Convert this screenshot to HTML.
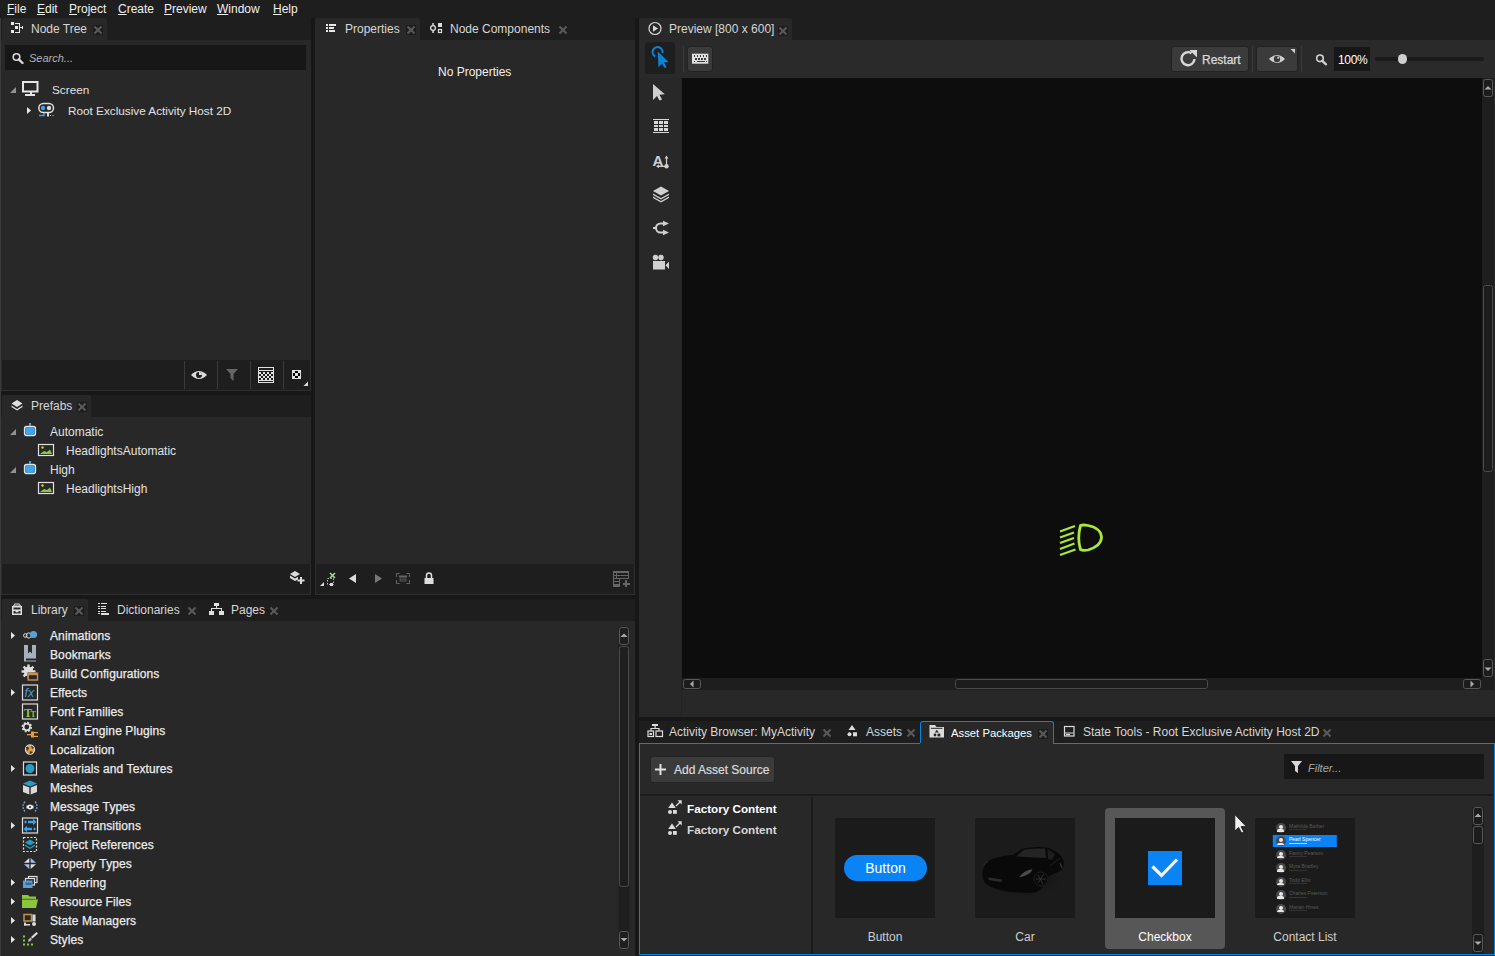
<!DOCTYPE html>
<html><head><meta charset="utf-8">
<style>
*{margin:0;padding:0;box-sizing:border-box}
html,body{width:1495px;height:956px;overflow:hidden;background:#1e1e1e;font-family:"Liberation Sans",sans-serif;font-size:12px;color:#e4e4e4}
.a{position:absolute}
.t{position:absolute;white-space:nowrap;line-height:14px}
.gap{background:#171717}
.panel{background:#282828}
.strip{background:#1e1e1e}
.tab{background:#282828;border-radius:2px 2px 0 0}
.cx{position:absolute;width:10px;height:10px;background:#1c1c1c}
.cx:before,.cx:after{content:"";position:absolute;left:0px;top:4px;width:10px;height:2px;background:#5a5a5a;transform:rotate(45deg)}
.cx:after{transform:rotate(-45deg)}
.cxi{position:absolute;width:10px;height:10px}
.cxi:before,.cxi:after{content:"";position:absolute;left:0px;top:4px;width:10px;height:2px;background:#5a5a5a;transform:rotate(45deg)}
.cxi:after{transform:rotate(-45deg)}
.tb{background:#1e1e1e;border:1px solid #2e2e2e}
.lib{color:#ececec;-webkit-text-stroke:0.25px #ececec;letter-spacing:0.1px}
.u{text-decoration:underline;text-underline-offset:1px}
svg{position:absolute;overflow:visible}
</style></head><body>
<!-- window border left -->
<div class="a" style="left:0;top:18px;width:1px;height:938px;background:#3a3a3a"></div>

<!-- MENU -->
<div class="t" style="left:7px;top:2px;color:#f0f0f0"><span class="u">F</span>ile</div>
<div class="t" style="left:37px;top:2px;color:#f0f0f0"><span class="u">E</span>dit</div>
<div class="t" style="left:69px;top:2px;color:#f0f0f0"><span class="u">P</span>roject</div>
<div class="t" style="left:118px;top:2px;color:#f0f0f0"><span class="u">C</span>reate</div>
<div class="t" style="left:164px;top:2px;color:#f0f0f0"><span class="u">P</span>review</div>
<div class="t" style="left:217px;top:2px;color:#f0f0f0"><span class="u">W</span>indow</div>
<div class="t" style="left:273px;top:2px;color:#f0f0f0"><span class="u">H</span>elp</div>

<!-- gaps between columns -->
<div class="a gap" style="left:311px;top:18px;width:4px;height:581px"></div>
<div class="a gap" style="left:635px;top:18px;width:4px;height:937px"></div>
<div class="a gap" style="left:1px;top:391px;width:310px;height:4px"></div>
<div class="a gap" style="left:1px;top:595px;width:634px;height:4px"></div>
<div class="a gap" style="left:639px;top:717px;width:856px;height:4px"></div>

<!-- NODE TREE -->
<div class="a tab" style="left:2px;top:18px;width:105px;height:22px"></div>
<div class="a panel" style="left:1px;top:40px;width:310px;height:320px"></div>
<div class="t" style="left:31px;top:22px;color:#d6d6d6">Node Tree</div>
<div class="cx" style="left:93px;top:25px"></div>
<div class="a" style="left:5px;top:45px;width:301px;height:25px;background:#171717"></div>
<div class="t" style="left:29px;top:51px;color:#b4b4b4;font-style:italic;font-size:11px">Search...</div>
<div class="a tb" style="left:1px;top:360px;width:310px;height:31px;border-top:none"></div>

<!-- PREFABS -->
<div class="a tab" style="left:2px;top:395px;width:89px;height:22px"></div>
<div class="a panel" style="left:1px;top:417px;width:310px;height:147px"></div>
<div class="t" style="left:31px;top:399px;color:#d6d6d6">Prefabs</div>
<div class="cx" style="left:77px;top:402px"></div>
<div class="a tb" style="left:1px;top:564px;width:310px;height:31px;border-top:none"></div>

<!-- PROPERTIES -->
<div class="a tab" style="left:315px;top:18px;width:105px;height:22px"></div>
<div class="a panel" style="left:315px;top:40px;width:320px;height:524px"></div>
<div class="t" style="left:345px;top:22px;color:#d6d6d6">Properties</div>
<div class="cx" style="left:406px;top:25px"></div>
<div class="t" style="left:450px;top:22px;color:#d6d6d6">Node Components</div>
<div class="cxi" style="left:558px;top:25px"></div>
<div class="t" style="left:438px;top:65px;color:#f0f0f0">No Properties</div>
<div class="a tb" style="left:315px;top:564px;width:320px;height:31px;border-top:none"></div>

<!-- LIBRARY -->
<div class="a tab" style="left:2px;top:599px;width:86px;height:22px"></div>
<div class="a panel" style="left:1px;top:621px;width:634px;height:335px"></div>
<div class="t" style="left:31px;top:603px;color:#d6d6d6">Library</div>
<div class="cx" style="left:74px;top:606px"></div>
<div class="t" style="left:117px;top:603px;color:#d6d6d6">Dictionaries</div>
<div class="cxi" style="left:187px;top:606px"></div>
<div class="t" style="left:231px;top:603px;color:#d6d6d6">Pages</div>
<div class="cxi" style="left:269px;top:606px"></div>

<!-- PREVIEW -->
<div class="a tab" style="left:639px;top:18px;width:153px;height:22px"></div>
<div class="a panel" style="left:639px;top:40px;width:856px;height:677px"></div>
<div class="t" style="left:669px;top:22px;color:#d6d6d6">Preview [800 x 600]</div>
<div class="cx" style="left:778px;top:26px"></div>
<div class="a" style="left:639px;top:40px;width:856px;height:38px;background:#2a2a2a"></div>
<div class="a" style="left:682px;top:78px;width:800px;height:600px;background:#0d0d0d"></div>

<!-- BOTTOM PANEL -->
<div class="a" style="left:920px;top:721px;width:134px;height:23px;background:#282828;border:1px solid #0a84d6;border-bottom:none;border-radius:3px 3px 0 0"></div>
<div class="a" style="left:639px;top:743px;width:856px;height:212px;background:#282828;border:1px solid #0a84d6;border-top:none"></div>
<div class="a" style="left:639px;top:743px;width:281px;height:1px;background:#0a84d6"></div>
<div class="a" style="left:1053px;top:743px;width:442px;height:1px;background:#0a84d6"></div>
<div class="t" style="left:669px;top:725px;color:#d6d6d6">Activity Browser: MyActivity</div>
<div class="cxi" style="left:822px;top:728px"></div>
<div class="t" style="left:866px;top:725px;color:#d6d6d6">Assets</div>
<div class="cxi" style="left:906px;top:728px"></div>
<div class="t" style="left:951px;top:726px;color:#ffffff;font-size:11.3px">Asset Packages</div>
<div class="cx" style="left:1038px;top:729px"></div>
<div class="t" style="left:1083px;top:725px;color:#d6d6d6">State Tools - Root Exclusive Activity Host 2D</div>
<div class="cxi" style="left:1322px;top:728px"></div>


<!-- NODE TREE CONTENT -->
<svg style="left:0;top:0" width="1" height="1">
<g fill="#e8e8e8" shape-rendering="crispEdges">
<rect x="11" y="22" width="3" height="3"/><rect x="15" y="26" width="3" height="3"/><rect x="11" y="30" width="3" height="3"/>
<rect x="15" y="23" width="5" height="1"/><rect x="19" y="23" width="1" height="10"/><rect x="15" y="32" width="5" height="1"/>
<rect x="20" y="27" width="3" height="1"/><rect x="22" y="26" width="1" height="3"/>
</g>
<!-- search icon -->
<g fill="none" stroke="#d8d8d8"><circle cx="16.5" cy="57" r="3.3" stroke-width="1.6"/></g>
<path d="M18.8 59.3 L22.5 63" stroke="#d8d8d8" stroke-width="2.4" stroke-linecap="round"/>
<!-- screen row -->
<path d="M10 93 L16 87 L16 93 Z" fill="#8f958c"/>
<rect x="23" y="82" width="14.5" height="9.5" fill="none" stroke="#e6e6e6" stroke-width="2"/>
<rect x="30" y="92" width="2" height="2" fill="#e6e6e6"/>
<rect x="25" y="94" width="10" height="2" fill="#e6e6e6"/>
<!-- root row -->
<path d="M27 107 L31 110.5 L27 114 Z" fill="#e8e8e8"/>
<rect x="38.8" y="103.5" width="14.7" height="9" rx="4.5" fill="none" stroke="#e0e0e0" stroke-width="1.5"/>
<circle cx="43" cy="108" r="2.2" fill="#3aa0e8"/><circle cx="49" cy="108" r="2.2" fill="#d8d8d8"/>
<path d="M39 115.5 H44 V113" fill="none" stroke="#3aa0e8" stroke-width="1.6"/>
<rect x="47" y="113" width="2" height="3.5" fill="#e0e0e0"/>
<rect x="50" y="115" width="1" height="1" fill="#ccc"/><rect x="52.5" y="115" width="1" height="1" fill="#ccc"/>
</svg>
<div class="t" style="left:52px;top:83px;font-size:11.75px;color:#e2e2e2">Screen</div>
<div class="t" style="left:68px;top:104px;font-size:11.75px;color:#e2e2e2">Root Exclusive Activity Host 2D</div>

<!-- node tree toolbar -->
<div class="a" style="left:184px;top:361px;width:1px;height:28px;background:#3a3a3a"></div>
<div class="a" style="left:217px;top:361px;width:1px;height:28px;background:#3a3a3a"></div>
<div class="a" style="left:250px;top:361px;width:1px;height:28px;background:#3a3a3a"></div>
<div class="a" style="left:283px;top:361px;width:1px;height:28px;background:#3a3a3a"></div>
<svg style="left:0;top:0" width="1" height="1">
<path d="M191 375 Q199 367 207 375 Q199 383 191 375 Z" fill="#dcdcdc"/>
<circle cx="199" cy="375" r="3" fill="#1e1e1e"/><path d="M199 372 A3 3 0 0 1 202 375 L199 375 Z" fill="#dcdcdc"/>
<path d="M226 369 H238 L233.5 374 V381 L230.5 378 V374 Z" fill="#666"/>
<rect x="258.5" y="367.5" width="15" height="15" fill="none" stroke="#e0e0e0" stroke-width="1"/>
<g fill="#e0e0e0" shape-rendering="crispEdges">
<rect x="259" y="372" width="2" height="2"/><rect x="263" y="372" width="2" height="2"/><rect x="267" y="372" width="2" height="2"/><rect x="271" y="372" width="2" height="2"/>
<rect x="261" y="374" width="2" height="2"/><rect x="265" y="374" width="2" height="2"/><rect x="269" y="374" width="2" height="2"/>
<rect x="259" y="376" width="2" height="2"/><rect x="263" y="376" width="2" height="2"/><rect x="267" y="376" width="2" height="2"/><rect x="271" y="376" width="2" height="2"/>
<rect x="261" y="378" width="2" height="2"/><rect x="265" y="378" width="2" height="2"/><rect x="269" y="378" width="2" height="2"/>
<rect x="259" y="380" width="15" height="1"/><rect x="259" y="370" width="15" height="1"/>
</g>
<rect x="292" y="370" width="9" height="9" fill="#e0e0e0"/>
<g fill="#000" shape-rendering="crispEdges"><rect x="295" y="371" width="3" height="2"/><rect x="295" y="376" width="3" height="2"/><rect x="293" y="373" width="2" height="3"/><rect x="298" y="373" width="2" height="3"/></g>
<path d="M303.5 386 L308 381.5 L308 386 Z" fill="#ddd"/>
</svg>

<!-- PREFABS CONTENT -->
<svg style="left:0;top:0" width="1" height="1">
<path d="M17 400 L22.5 403.5 L17 407 L11.5 403.5 Z" fill="#e0e0e0"/>
<path d="M11.5 405.5 L17 409 L22.5 405.5 L22.5 407 L17 410.5 L11.5 407 Z" fill="#e0e0e0"/>
<path d="M10 435 L16 429 L16 435 Z" fill="#8f958c"/>
<rect x="24.5" y="426.5" width="11" height="9" rx="2" fill="#2a7fc0" stroke="#e0e0e0" stroke-width="1.3"/>
<rect x="26" y="428" width="8" height="6" rx="1" fill="#3ea6ea"/>
<rect x="29" y="423" width="2" height="3" fill="#3ea6ea"/>
<rect x="38.5" y="444.5" width="15" height="11" fill="none" stroke="#e0e0e0" stroke-width="1.2"/>
<path d="M40 454 L44 451 L47 452 L50 449.5 L52 454 Z" fill="#8cc63f"/>
<circle cx="42.5" cy="447.5" r="1.2" fill="#c8e020"/>
<path d="M10 473 L16 467 L16 473 Z" fill="#8f958c"/>
<rect x="24.5" y="464.5" width="11" height="9" rx="2" fill="#2a7fc0" stroke="#e0e0e0" stroke-width="1.3"/>
<rect x="26" y="466" width="8" height="6" rx="1" fill="#3ea6ea"/>
<rect x="29" y="461" width="2" height="3" fill="#3ea6ea"/>
<rect x="38.5" y="482.5" width="15" height="11" fill="none" stroke="#e0e0e0" stroke-width="1.2"/>
<path d="M40 492 L44 489 L47 490 L50 487.5 L52 492 Z" fill="#8cc63f"/>
<circle cx="42.5" cy="485.5" r="1.2" fill="#c8e020"/>
<!-- prefab toolbar icon -->
<path d="M295 571 L300 574 L295 577 L290 574 Z" fill="#dcdcdc"/>
<path d="M290 575.5 L295 578.5 L298 576.7 V579.5 L295 581 L290 578 Z" fill="#dcdcdc"/>
<rect x="300" y="577" width="2" height="7" fill="#dcdcdc"/><rect x="297.5" y="579.5" width="7" height="2" fill="#dcdcdc"/>
</svg>
<div class="t" style="left:50px;top:425px;color:#e2e2e2">Automatic</div>
<div class="t" style="left:66px;top:444px;color:#e2e2e2">HeadlightsAutomatic</div>
<div class="t" style="left:50px;top:463px;color:#e2e2e2">High</div>
<div class="t" style="left:66px;top:482px;color:#e2e2e2">HeadlightsHigh</div>

<!-- PROPERTIES CONTENT -->
<svg style="left:0;top:0" width="1" height="1">
<g fill="#e8e8e8" shape-rendering="crispEdges">
<rect x="326" y="24" width="2" height="2"/><rect x="329" y="24" width="7" height="2"/>
<rect x="326" y="27" width="2" height="2"/><rect x="329" y="27" width="5" height="2"/>
<rect x="326" y="30" width="2" height="2"/><rect x="329" y="30" width="6" height="2"/>
</g>
<rect x="432.3" y="23" width="1.5" height="10" fill="#ddd"/>
<circle cx="433" cy="28" r="2.4" fill="#1e1e1e" stroke="#ddd" stroke-width="1.3"/>
<rect x="438" y="23" width="4" height="4" fill="#ddd"/>
<rect x="438.5" y="29.5" width="3" height="3" fill="none" stroke="#ddd" stroke-width="1.2"/>
<!-- bottom toolbar -->
<path d="M320 586 L324 582 L324 586 Z" fill="#ddd"/>
<rect x="327.5" y="578.5" width="6" height="6" fill="none" stroke="#bbb" stroke-dasharray="1.5 1.5"/>
<rect x="330" y="583" width="3" height="3" fill="#ddd"/>
<path d="M330 573 L335 578 M335 573 L330 578" stroke="#b5d5a0" stroke-width="1.5"/>
<path d="M349 578.5 L356 574 L356 583 Z" fill="#dcdcdc"/>
<path d="M375 574 L382 578.5 L375 583 Z" fill="#777"/>
<g fill="none" stroke="#666" stroke-width="1">
<path d="M396.5 577 V573.5 H399.5 M406.5 573.5 H409.5 V577 M409.5 580 V583.5 H406.5 M399.5 583.5 H396.5 V580"/>
</g>
<rect x="399" y="575.5" width="8" height="2" fill="#666"/><rect x="400" y="579" width="6" height="2" fill="none" stroke="#666" stroke-width="0.8"/>
<path d="M426.5 578 V575.5 A2.5 2.5 0 0 1 431.5 575.5 V578" fill="none" stroke="#ddd" stroke-width="1.5"/>
<rect x="424.5" y="578" width="9" height="6" fill="#ddd"/>
<g shape-rendering="crispEdges">
<rect x="613" y="571" width="16" height="16" fill="#666"/>
<g fill="#1e1e1e"><rect x="614" y="573" width="2" height="2"/><rect x="617" y="573" width="11" height="2"/><rect x="614" y="576" width="2" height="2"/><rect x="617" y="576" width="11" height="2"/><rect x="614" y="579" width="5" height="2"/><rect x="614" y="582" width="5" height="2"/>
<rect x="620" y="579" width="9" height="8"/></g>
<rect x="625" y="580" width="2" height="7" fill="#666"/><rect x="622.5" y="582.5" width="7" height="2" fill="#666"/>
</g>
</svg>


<!-- LIBRARY CONTENT -->
<svg style="left:0;top:0" width="1" height="1">
<path d="M11 632.0 L15 635.5 L11 639.0 Z" fill="#e4e8e0"/>
<path d="M11 689.0 L15 692.5 L11 696.0 Z" fill="#e4e8e0"/>
<path d="M11 765.0 L15 768.5 L11 772.0 Z" fill="#e4e8e0"/>
<path d="M11 822.0 L15 825.5 L11 829.0 Z" fill="#e4e8e0"/>
<path d="M11 879.0 L15 882.5 L11 886.0 Z" fill="#e4e8e0"/>
<path d="M11 898.0 L15 901.5 L11 905.0 Z" fill="#e4e8e0"/>
<path d="M11 917.0 L15 920.5 L11 924.0 Z" fill="#e4e8e0"/>
<path d="M11 936.0 L15 939.5 L11 943.0 Z" fill="#e4e8e0"/>
<circle cx="25.3" cy="635.5" r="1.8" fill="none" stroke="#ddd" stroke-width="1"/><circle cx="28.8" cy="635.5" r="2.6" fill="none" stroke="#ddd" stroke-width="1"/><circle cx="33.5" cy="634.5" r="3.6" fill="#5aa0d8"/>
<path d="M24 645.0 H36 V658.5 H26 V660.5 H36 V661.5 H24 Z" fill="#a8b0bc"/><path d="M28 645.0 V653.5 L30 651.5 L32 653.5 V645.0 Z" fill="#282828"/>
<circle cx="28.5" cy="671.5" r="4.8" fill="#ddd"/><rect x="27.3" y="664.5" width="2.4" height="3" fill="#ddd" transform="rotate(0 28.5 671.5)"/><rect x="27.3" y="664.5" width="2.4" height="3" fill="#ddd" transform="rotate(45 28.5 671.5)"/><rect x="27.3" y="664.5" width="2.4" height="3" fill="#ddd" transform="rotate(90 28.5 671.5)"/><rect x="27.3" y="664.5" width="2.4" height="3" fill="#ddd" transform="rotate(135 28.5 671.5)"/><rect x="27.3" y="664.5" width="2.4" height="3" fill="#ddd" transform="rotate(180 28.5 671.5)"/><rect x="27.3" y="664.5" width="2.4" height="3" fill="#ddd" transform="rotate(225 28.5 671.5)"/><rect x="27.3" y="664.5" width="2.4" height="3" fill="#ddd" transform="rotate(270 28.5 671.5)"/><rect x="27.3" y="664.5" width="2.4" height="3" fill="#ddd" transform="rotate(315 28.5 671.5)"/><rect x="27.5" y="672.5" width="10.5" height="8" fill="#282828"/><rect x="28.2" y="673.2" width="9.3" height="6.8" fill="none" stroke="#c89050" stroke-width="1.4"/><rect x="28" y="673.0" width="10" height="2.2" fill="#c89050"/>
<rect x="22.5" y="685.0" width="15" height="15" fill="none" stroke="#ddd" stroke-width="1.2"/><text x="24.5" y="696.5" font-family="Liberation Sans" font-style="italic" font-size="12.5" fill="#4a9ad8">fx</text>
<rect x="22.5" y="704.0" width="15" height="15" fill="none" stroke="#ddd" stroke-width="1.2"/><text x="24" y="716.5" font-family="Liberation Serif" font-weight="bold" font-size="12" fill="#8cc63f">T</text><text x="30.5" y="716.5" font-family="Liberation Serif" font-weight="bold" font-size="8" fill="#8cc63f">T</text>
<circle cx="26.8" cy="727.0" r="4" fill="none" stroke="#ddd" stroke-width="2.5" stroke-dasharray="1.8 1.3"/><circle cx="26.8" cy="727.0" r="3.2" fill="none" stroke="#ddd" stroke-width="1.6"/><rect x="27" y="734.0" width="5" height="1.3" fill="#e0a040"/><path d="M31 731.5 H34 V737.5 H31 Z" fill="#e0a040"/><rect x="34" y="732.0" width="4" height="1.2" fill="#e0a040"/><rect x="34" y="735.8" width="4" height="1.2" fill="#e0a040"/>
<circle cx="30" cy="749.5" r="4.6" fill="#e0a040" stroke="#ddd" stroke-width="1.1"/><path d="M26 747 Q28 746 29 748 L27.5 751 Q26 750 26 747 Z M31 745.5 Q33 746 34 748 L32 749 Z M30 751 L33 752 Q31.5 754 29.5 754 Z" fill="#3a3a3a"/>
<rect x="23.5" y="762.0" width="13" height="13" fill="#1e1e1e" stroke="#ddd" stroke-width="1.2"/><circle cx="30" cy="768.5" r="4.5" fill="#2a9ac0"/>
<path d="M30 780.5 L37 783.5 L30 786.5 L23 783.5 Z" fill="#2a9ac0"/><path d="M23 785.0 L29.3 787.5 V794.5 L23 792.0 Z" fill="#d8d8d8"/><path d="M37 785.0 L30.7 787.5 V794.5 L37 792.0 Z" fill="#d8d8d8"/>
<path d="M25 801.5 Q21 806.5 25 811.5 M35 801.5 Q39 806.5 35 811.5" fill="none" stroke="#6a9ad8" stroke-width="1.3" stroke-dasharray="2 1"/><rect x="26.5" y="805.5" width="7" height="3" fill="#eee"/><circle cx="30" cy="807.0" r="2.5" fill="#eee"/><circle cx="30" cy="807.0" r="1" fill="#282828"/>
<rect x="22.5" y="818.0" width="15" height="15" fill="none" stroke="#ddd" stroke-width="1.2"/><path d="M24.5 822 H26.5 M28 822 H34 M26 829 H32 M33.5 829 H35.5" stroke="#3aa0e8" stroke-width="2.6"/><path d="M33 818.8 L36.5 822 L33 825.2 Z M27 825.8 L23.5 829 L27 832.2 Z" fill="#3aa0e8"/>
<rect x="23.5" y="837.5" width="13" height="14" fill="none" stroke="#ddd" stroke-width="1.2" stroke-dasharray="2 1.5"/><path d="M30 839.5 L35 842.5 L30 845.5 L25 842.5 Z" fill="#2a9ac0"/><path d="M25 844.5 L30 847.5 L35 844.5 V846.0 L30 849.0 L25 846.0 Z" fill="#2a9ac0"/>
<path d="M29.3 858.0 L24 862.8 H29.3 Z" fill="#ddd"/><path d="M30.7 858.0 L36 862.8 H30.7 Z" fill="#a0c0f0"/><path d="M29.3 869.0 L24 864.2 H29.3 Z" fill="#a0c0f0"/><path d="M30.7 869.0 L36 864.2 H30.7 Z" fill="#ddd"/>
<rect x="28.5" y="876.5" width="8.5" height="6" fill="none" stroke="#ddd" stroke-width="1.2"/><rect x="25.5" y="878.5" width="9" height="6.5" fill="#282828" stroke="#ddd" stroke-width="1.2"/><rect x="23" y="880.5" width="9.5" height="7.5" fill="#5aa0d8"/><rect x="25.5" y="882.5" width="6" height="2.5" fill="#3a6a90"/>
<path d="M22 895.0 H28 L29.5 896.5 H36 V899.5 H22 Z" fill="#8cc63f"/><path d="M22 908.0 V899.5 H38 L36 908.0 Z" fill="#8cc63f"/><path d="M22 898.5 H35 V900.0 H22 Z" fill="#282828" opacity="0.3"/>
<rect x="24" y="914.5" width="7.5" height="6.5" fill="none" stroke="#c89050" stroke-width="1.5"/><rect x="32.5" y="914.5" width="3" height="7" fill="#ddd"/><rect x="24" y="922.5" width="2" height="3" fill="#ddd"/><rect x="24" y="924.0" width="6" height="1.5" fill="#ddd"/><circle cx="34" cy="924.0" r="2" fill="#ddd"/>
<g fill="#8cc63f"><rect x="23" y="935.5" width="2" height="2"/><rect x="23" y="939.5" width="2" height="2"/><rect x="23" y="943.5" width="2" height="2"/><rect x="27" y="943.5" width="2" height="2"/><rect x="31" y="943.5" width="2" height="2"/></g><path d="M36.5 932.0 L38 933.5 L32.5 938.5 L31 937.0 Z" fill="#ddd"/><path d="M30.5 937.5 L32 939.0 L30 941.5 L28 941.5 L28.5 939.5 Z" fill="#bbb"/>

<!-- library tab icons -->
<path d="M12 606 H22 V615 H12 Z" fill="#e0e0e0"/><rect x="13.5" y="607.5" width="7" height="2" fill="#282828"/><rect x="13.5" y="611" width="7" height="2.5" fill="#282828"/><rect x="15.5" y="611" width="3" height="1.3" fill="#e0e0e0"/><path d="M13 606 L14.5 603.5 H19.5 L21 606 Z" fill="#e0e0e0"/><rect x="14.5" y="604.5" width="5" height="1" fill="#282828"/>
<g fill="#e0e0e0" shape-rendering="crispEdges">
<rect x="98" y="603" width="2" height="1.3"/><rect x="98" y="605.5" width="2" height="1.3"/><rect x="98" y="608" width="2" height="1.3"/><rect x="98" y="610.5" width="2" height="1.3"/><rect x="98" y="613" width="2" height="1.3"/><rect x="101" y="603" width="6" height="1.3"/><rect x="101" y="605.5" width="5" height="1.3"/><rect x="101" y="608" width="5" height="1.3"/><rect x="101" y="610.5" width="5" height="1.3"/><rect x="101" y="613" width="8" height="1.6"/>
<rect x="214" y="603" width="5" height="3"/><rect x="216" y="606" width="1" height="3"/><rect x="211" y="608" width="11" height="1"/><rect x="211" y="608" width="1" height="3"/><rect x="221" y="608" width="1" height="3"/><rect x="209" y="611" width="5" height="4"/><rect x="219" y="611" width="5" height="4"/>
</g>
<!-- library scrollbar -->
<rect x="618.5" y="626.5" width="11" height="322" fill="#1e1e1e"/>
<rect x="619.5" y="627.5" width="9" height="17" rx="2" fill="#1e1e1e" stroke="#5a5a5a" stroke-width="1"/>
<path d="M620.5 637 L624 633.5 L627.5 637 Z" fill="#aaa"/>
<rect x="619.5" y="646.5" width="9" height="240" rx="2" fill="#1e1e1e" stroke="#4a4a4a" stroke-width="1"/>
<rect x="619.5" y="931.5" width="9" height="17" rx="2" fill="#1e1e1e" stroke="#5a5a5a" stroke-width="1"/>
<path d="M620.5 938 L624 941.5 L627.5 938 Z" fill="#aaa"/>
</svg>
<div class="t lib" style="left:50px;top:629px">Animations</div>
<div class="t lib" style="left:50px;top:648px">Bookmarks</div>
<div class="t lib" style="left:50px;top:667px">Build Configurations</div>
<div class="t lib" style="left:50px;top:686px">Effects</div>
<div class="t lib" style="left:50px;top:705px">Font Families</div>
<div class="t lib" style="left:50px;top:724px">Kanzi Engine Plugins</div>
<div class="t lib" style="left:50px;top:743px">Localization</div>
<div class="t lib" style="left:50px;top:762px">Materials and Textures</div>
<div class="t lib" style="left:50px;top:781px">Meshes</div>
<div class="t lib" style="left:50px;top:800px">Message Types</div>
<div class="t lib" style="left:50px;top:819px">Page Transitions</div>
<div class="t lib" style="left:50px;top:838px">Project References</div>
<div class="t lib" style="left:50px;top:857px">Property Types</div>
<div class="t lib" style="left:50px;top:876px">Rendering</div>
<div class="t lib" style="left:50px;top:895px">Resource Files</div>
<div class="t lib" style="left:50px;top:914px">State Managers</div>
<div class="t lib" style="left:50px;top:933px">Styles</div>


<!-- PREVIEW CONTENT -->
<div class="a" style="left:681px;top:78px;width:1px;height:639px;background:#232323"></div>
<div class="a" style="left:645px;top:42px;width:30px;height:32px;background:#1e1e1e;border-radius:3px"></div>
<div class="a" style="left:683px;top:46px;width:1px;height:26px;background:#3a3a3a"></div>
<div class="a" style="left:687px;top:46px;width:26px;height:26px;background:#3b3b3b;border-radius:3px;border:1px solid #222"></div>
<div class="a" style="left:1171px;top:46px;width:78px;height:26px;background:#3b3b3b;border-radius:3px;border:1px solid #222"></div>
<div class="a" style="left:1252px;top:46px;width:1px;height:26px;background:#3a3a3a"></div>
<div class="a" style="left:1256px;top:46px;width:42px;height:26px;background:#3b3b3b;border-radius:3px;border:1px solid #222"></div>
<div class="a" style="left:1301px;top:46px;width:1px;height:26px;background:#3a3a3a"></div>
<div class="a" style="left:1334px;top:47px;width:36px;height:24px;background:#171717"></div>
<div class="t" style="left:1338px;top:53px;color:#ffffff;font-size:12px;letter-spacing:-0.3px">100%</div>
<div class="t" style="left:1202px;top:53px;color:#dcdcdc;font-size:12px;-webkit-text-stroke:0.25px #dcdcdc">Restart</div>
<div class="a" style="left:1375px;top:57px;width:109px;height:4px;background:#1a1a1a;border-radius:3px"></div>
<div class="a" style="left:1397.5px;top:54px;width:9.5px;height:9.5px;background:#cfcfcf;border-radius:50%"></div>
<svg style="left:0;top:0" width="1" height="1">
<!-- preview tab icon -->
<circle cx="655" cy="28.5" r="6" fill="none" stroke="#d8d8d8" stroke-width="1.2"/>
<path d="M653 25.3 L658 28.5 L653 31.7 Z" fill="#d8d8d8"/>
<!-- interact -->
<path d="M655.2 56.5 A5 5 0 1 1 662.5 53" fill="none" stroke="#0a84d6" stroke-width="2"/>
<path d="M657.7 51.5 L668.5 62 L664 62.5 L666.5 67 L664.5 68 L662 63.5 L658.5 67.5 Z" fill="#0a84d6"/>
<!-- keyboard -->
<rect x="692" y="53.7" width="16.3" height="10" fill="#e0e0e0"/>
<g fill="#3a3a3a" shape-rendering="crispEdges">
<rect x="693.5" y="55.2" width="1.5" height="1.5"/><rect x="696.5" y="55.2" width="1.5" height="1.5"/><rect x="699.5" y="55.2" width="1.5" height="1.5"/><rect x="702.5" y="55.2" width="1.5" height="1.5"/><rect x="705.5" y="55.2" width="1.5" height="1.5"/>
<rect x="695" y="58" width="1.5" height="1.5"/><rect x="698" y="58" width="1.5" height="1.5"/><rect x="701" y="58" width="1.5" height="1.5"/><rect x="704" y="58" width="1.5" height="1.5"/>
<rect x="693.5" y="60.8" width="1.5" height="1.5"/><rect x="696.5" y="61" width="8" height="1"/><rect x="705.5" y="60.8" width="1.5" height="1.5"/>
</g>
<!-- select -->
<path d="M653 84 L664.8 94.3 L659.5 94.8 L662 99.5 L659.5 100.5 L657 96 L653 100 Z" fill="#cfcfcf"/>
<!-- table -->
<g fill="#d8d8d8" shape-rendering="crispEdges">
<rect x="653" y="119" width="16" height="1"/><rect x="653" y="132" width="16" height="1"/>
<rect x="654" y="121" width="4" height="3"/><rect x="659" y="121" width="4" height="3"/><rect x="664" y="121" width="4" height="3"/>
<rect x="654" y="125" width="4" height="2"/><rect x="659" y="125" width="4" height="2"/><rect x="664" y="125" width="4" height="2"/>
<rect x="654" y="128" width="4" height="3"/><rect x="659" y="128" width="4" height="3"/><rect x="664" y="128" width="4" height="3"/>
</g>
<!-- A icon -->
<text x="652.5" y="166" font-family="Liberation Sans" font-weight="bold" font-size="15" fill="#cfcfcf">A</text>
<path d="M666.5 158 V165 M658 166.3 H665" stroke="#cfcfcf" stroke-width="1.2"/>
<path d="M664.5 158.5 L666.5 155.5 L668.5 158.5 Z M659 164.3 L656 166.3 L659 168.3 Z" fill="#cfcfcf"/>
<circle cx="666.5" cy="166.3" r="2.2" fill="#cfcfcf"/>
<!-- layers -->
<path d="M661 186.5 L669 191 L661 195.5 L653 191 Z" fill="#d0d0d0"/>
<path d="M653 193.5 L661 198 L669 193.5 V195 L661 199.5 L653 195 Z" fill="#d0d0d0"/>
<path d="M653 196.5 L661 201 L669 196.5 V198 L661 202.5 L653 198 Z" fill="#d0d0d0"/>
<!-- shuffle -->
<path d="M653 228 H657" stroke="#d0d0d0" stroke-width="2"/>
<path d="M664 223.5 H660.5 A4.5 4.5 0 0 0 660.5 232.5 H664" fill="none" stroke="#d0d0d0" stroke-width="2"/>
<path d="M663 220.8 L669 223.5 L663 226.3 Z M663 229.8 L669 232.5 L663 235.3 Z" fill="#d0d0d0"/>
<!-- camera -->
<circle cx="655.5" cy="257.5" r="2.7" fill="#d0d0d0"/><circle cx="661" cy="257.5" r="2.7" fill="#d0d0d0"/>
<rect x="653" y="261" width="12" height="8.5" fill="#d0d0d0"/>
<path d="M665.5 265.2 L669 261.5 V269 Z" fill="#d0d0d0"/>
<!-- restart icon -->
<path d="M1194.5 59 A6.5 6.5 0 1 1 1191.5 53.2" fill="none" stroke="#d8d8d8" stroke-width="2.4"/>
<path d="M1189.5 50 L1197 50 L1197 57.5 Z" fill="#d8d8d8"/>
<!-- eye -->
<path d="M1269 59 Q1277 51 1285 59 Q1277 67 1269 59 Z" fill="#d0d0d0"/>
<circle cx="1277" cy="59" r="3.2" fill="#3b3b3b"/><circle cx="1278.3" cy="57.7" r="1.1" fill="#d0d0d0"/>
<path d="M1290.5 49 H1295 V53.5 Z" fill="#d0d0d0"/>
<!-- magnifier -->
<circle cx="1320" cy="58.3" r="3.3" fill="none" stroke="#d0d0d0" stroke-width="1.6"/>
<path d="M1322.3 60.8 L1326 64.3" stroke="#d0d0d0" stroke-width="2.4" stroke-linecap="round"/>
<!-- viewport scrollbars -->
<rect x="1482" y="78" width="12" height="612" fill="#1e1e1e"/>
<rect x="682" y="678" width="800" height="12" fill="#1e1e1e"/>
<rect x="1483.5" y="79.5" width="9" height="17" rx="2" fill="#1c1c1c" stroke="#5a5a5a" stroke-width="1"/>
<path d="M1484.5 89.5 L1488 86 L1491.5 89.5 Z" fill="#aaa"/>
<rect x="1483.5" y="285.5" width="9" height="186" rx="2" fill="#1c1c1c" stroke="#4a4a4a" stroke-width="1"/>
<rect x="1483.5" y="659.5" width="9" height="17" rx="2" fill="#1c1c1c" stroke="#5a5a5a" stroke-width="1"/>
<path d="M1484.5 667.5 L1488 671 L1491.5 667.5 Z" fill="#aaa"/>
<rect x="683.5" y="679.5" width="17" height="9" rx="2" fill="#1c1c1c" stroke="#5a5a5a" stroke-width="1"/>
<path d="M693.5 680.5 L690 684 L693.5 687.5 Z" fill="#aaa"/>
<rect x="955.5" y="679.5" width="252" height="9" rx="2" fill="#1c1c1c" stroke="#4a4a4a" stroke-width="1"/>
<rect x="1463.5" y="679.5" width="17" height="9" rx="2" fill="#1c1c1c" stroke="#5a5a5a" stroke-width="1"/>
<path d="M1470.5 680.5 L1474 684 L1470.5 687.5 Z" fill="#aaa"/>
<!-- headlight -->
<g stroke="#a8e83a" stroke-width="2.3" fill="none">
<path d="M1060 531.5 L1075 526"/><path d="M1060 537.5 L1074 532.5"/><path d="M1060 543 L1074 538"/><path d="M1060 549 L1074.5 543.5"/><path d="M1060 555 L1075.5 549.5"/>
<path d="M1080.5 525.5 Q1077 538 1080.5 549.5 Q1083 551 1088 550 Q1101 546 1101.5 537.5 Q1101 528 1088 525.5 Q1083 524.5 1080.5 525.5 Z" stroke-width="2.8"/>
</g>
</svg>


<!-- BOTTOM PANEL CONTENT -->
<div class="a" style="left:650px;top:756px;width:125px;height:27px;background:#3b3b3b;border:1px solid #242424;border-radius:3px"></div>
<div class="t" style="left:674px;top:763px;color:#dcdcdc;font-size:12px;-webkit-text-stroke:0.2px #dcdcdc">Add Asset Source</div>
<div class="a" style="left:1284px;top:754px;width:200px;height:25px;background:#171717"></div>
<div class="t" style="left:1308px;top:761px;color:#a8a8a8;font-style:italic;font-size:11px">Filter...</div>
<div class="a" style="left:640px;top:794px;width:853px;height:2px;background:#1a1a1a"></div>
<div class="a" style="left:811px;top:797px;width:2px;height:157px;background:#1a1a1a"></div>
<div class="t" style="left:687px;top:802px;color:#ffffff;font-weight:bold;font-size:11.7px">Factory Content</div>
<div class="t" style="left:687px;top:823px;color:#d8d8d8;font-weight:bold;font-size:11.7px">Factory Content</div>
<!-- grid -->
<div class="a" style="left:1105px;top:808px;width:120px;height:141px;background:#575757;border-radius:4px"></div>
<div class="a" style="left:835px;top:818px;width:100px;height:100px;background:#1b1b1b"></div>
<div class="a" style="left:975px;top:818px;width:100px;height:100px;background:#1b1b1b;overflow:hidden"></div>
<div class="a" style="left:1115px;top:818px;width:100px;height:100px;background:#1b1b1b"></div>
<div class="a" style="left:1255px;top:818px;width:100px;height:100px;background:#1b1b1b"></div>
<div class="a" style="left:844px;top:855px;width:83px;height:26px;background:#0a84f5;border-radius:13px"></div>
<div class="t" style="left:844px;top:861px;width:83px;text-align:center;color:#ffffff;font-size:14px">Button</div>
<div class="a" style="left:1148px;top:851px;width:34px;height:34px;background:#0a84f5"></div>
<div class="t" style="left:835px;top:930px;width:100px;text-align:center;color:#cfcfcf">Button</div>
<div class="t" style="left:975px;top:930px;width:100px;text-align:center;color:#cfcfcf">Car</div>
<div class="t" style="left:1115px;top:930px;width:100px;text-align:center;color:#ffffff">Checkbox</div>
<div class="t" style="left:1255px;top:930px;width:100px;text-align:center;color:#cfcfcf">Contact List</div>
<svg style="left:0;top:0" width="1" height="1">
<!-- tab icons -->
<g fill="none" stroke="#dcdcdc" stroke-width="1.2">
<rect x="648" y="731" width="5.5" height="5.5"/><rect x="656" y="731" width="6.5" height="5.5"/>
<path d="M651 731 V728.5 H659 V731"/>
</g>
<rect x="652" y="724" width="6" height="2" fill="#dcdcdc"/><rect x="654.5" y="725.5" width="1.2" height="3" fill="#dcdcdc"/>
<rect x="649.5" y="733" width="2.5" height="2" fill="#dcdcdc"/>
<path d="M852 725 L855.5 730 H848.5 Z" fill="#dcdcdc"/><circle cx="849.5" cy="734.3" r="2" fill="#dcdcdc"/><rect x="853" y="732.3" width="4" height="4" fill="#dcdcdc"/>
<path d="M929.5 725 H935 L936.5 727 H944 V737.5 H929.5 Z" fill="#dcdcdc"/>
<rect x="931" y="727.8" width="11.5" height="1" fill="#282828"/>
<path d="M936.8 729.8 L938.8 732.5 H934.8 Z" fill="#282828"/><circle cx="935" cy="735" r="1.4" fill="#282828"/><rect x="937.5" y="733.6" width="2.8" height="2.8" fill="#282828"/>
<rect x="1064.5" y="726.5" width="9.5" height="9.5" fill="none" stroke="#dcdcdc" stroke-width="1.2"/><rect x="1065" y="732.5" width="8.5" height="1" fill="#dcdcdc"/><rect x="1066" y="734" width="4" height="1.2" fill="#dcdcdc"/>
<!-- add icon -->
<path d="M660.5 764 V775 M655 769.5 H666" stroke="#e0e0e0" stroke-width="2"/>
<!-- filter icon -->
<path d="M1291 761 H1302 L1298 766 V773 L1295 771 V766 Z" fill="#d8d8d8"/>
<!-- factory content icons -->
<path d="M672 802.5 L675.8 808 H668.2 Z" fill="#dcdcdc"/><circle cx="670" cy="812" r="2" fill="#dcdcdc"/><rect x="673" y="810" width="3.8" height="3.8" fill="#dcdcdc"/><path d="M676 806 L680.5 801.5" stroke="#dcdcdc" stroke-width="1.3"/><path d="M677.5 800.3 H681.7 V804.5 Z" fill="#dcdcdc"/>
<path d="M672 823.5 L675.8 829 H668.2 Z" fill="#dcdcdc"/><circle cx="670" cy="833" r="2" fill="#dcdcdc"/><rect x="673" y="831" width="3.8" height="3.8" fill="#dcdcdc"/><path d="M676 827 L680.5 822.5" stroke="#dcdcdc" stroke-width="1.3"/><path d="M677.5 821.3 H681.7 V825.5 Z" fill="#dcdcdc"/>
<!-- checkmark -->
<path d="M1152.5 866.5 L1161.5 875.5 L1177 859.5" fill="none" stroke="#f4f4f4" stroke-width="3.2"/>
<!-- car -->
<defs><radialGradient id="cg" cx="0.5" cy="0.5" r="0.5"><stop offset="0" stop-color="#0c0c0c"/><stop offset="1" stop-color="#1b1b1b" stop-opacity="0"/></radialGradient></defs>
<ellipse cx="1024" cy="880" rx="46" ry="20" fill="url(#cg)"/>
<path d="M982.5 872 Q984 862 992 859 Q1005 855 1013 855 L1023 848.5 Q1035 846 1048 847.5 L1058 853 Q1063 857 1064 864 Q1063 870 1058 872 L1049 876 Q1044 880 1042 888 Q1038 893 1030 893 L1010 892 Q995 890 986 884 Q982 879 982.5 872 Z" fill="#090909"/>
<path d="M1016 856.5 L1024.5 849.5 Q1035 848 1045 848.5 L1046 858 Q1030 857 1016 856.5 Z" fill="#242424"/>
<path d="M1047.5 849 L1055 854 L1052 860 L1048 859 Z" fill="#1e1e1e"/>
<path d="M1019 877.5 Q1024 870 1032.5 869.3 Q1031 875 1019 877.5 Z" fill="#4a4a4a"/>
<path d="M988.5 877.5 L1002 879.5 L1001.5 882 L988.5 880 Z" fill="#2c2c2c"/>
<path d="M983 866 Q986 862 988.5 861" stroke="#2a2a2a" stroke-width="1.2" fill="none"/>
<circle cx="1041" cy="879" r="7" fill="#0a0a0a" stroke="#1e1e1e" stroke-width="1"/>
<path d="M1038 875 L1043 884 M1044 874 L1038 883 M1036 879 H1046" stroke="#3a3a3a" stroke-width="0.8"/>
<path d="M1060 863 L1062 868" stroke="#333" stroke-width="1.5"/>
<path d="M1050 866 L1060 858" stroke="#222" stroke-width="1"/>
<!-- contact list -->
<g>
<rect x="1272.8" y="835" width="64" height="12" fill="#0a84f5"/>
</g>
<!-- asset scrollbar -->
<rect x="1472" y="807" width="12" height="147" fill="#1e1e1e"/>
<rect x="1473.5" y="807.5" width="9" height="17" rx="2" fill="#1c1c1c" stroke="#5a5a5a" stroke-width="1"/>
<path d="M1474.5 817 L1478 813.5 L1481.5 817 Z" fill="#aaa"/>
<rect x="1473.5" y="826.5" width="9" height="17" rx="2" fill="#1c1c1c" stroke="#5a5a5a" stroke-width="1"/>
<rect x="1473.5" y="934.5" width="9" height="17" rx="2" fill="#1c1c1c" stroke="#5a5a5a" stroke-width="1"/>
<path d="M1474.5 941.5 L1478 945 L1481.5 941.5 Z" fill="#aaa"/>
<!-- cursor -->
<path d="M1234.8 814.5 L1234.8 831 L1238.6 827.4 L1241.6 833 L1243.8 832 L1241 826.6 L1246.3 826.6 Z" fill="#f0f0f0" stroke="#111" stroke-width="0.8"/>
</svg>
<div class="a" style="left:1275.5px;top:822.8px;width:10px;height:10px;border-radius:50%;background:#4a4a4a"></div>
<div class="a" style="left:1278.5px;top:824.8px;width:4px;height:4px;border-radius:50%;background:#e8e8e8"></div>
<div class="a" style="left:1277px;top:829.0px;width:7px;height:2.5px;border-radius:2px 2px 0 0;background:#e8e8e8"></div>
<div class="t" style="left:1289px;top:822.8px;font-size:5px;line-height:6px;color:#5a5a5a">Mathilda Barber</div>
<div class="a" style="left:1289px;top:829.3px;width:18px;height:1.2px;background:#333"></div>
<div class="a" style="left:1275.5px;top:836.2px;width:10px;height:10px;border-radius:50%;background:#4a4a4a"></div>
<div class="a" style="left:1278.5px;top:838.2px;width:4px;height:4px;border-radius:50%;background:#e8e8e8"></div>
<div class="a" style="left:1277px;top:842.5px;width:7px;height:2.5px;border-radius:2px 2px 0 0;background:#e8e8e8"></div>
<div class="t" style="left:1289px;top:836.3px;font-size:5px;line-height:6px;color:#ffffff">Pearl Spencer</div>
<div class="a" style="left:1289px;top:842.8px;width:18px;height:1.2px;background:#c8d8f0"></div>
<div class="a" style="left:1275.5px;top:849.7px;width:10px;height:10px;border-radius:50%;background:#4a4a4a"></div>
<div class="a" style="left:1278.5px;top:851.7px;width:4px;height:4px;border-radius:50%;background:#e8e8e8"></div>
<div class="a" style="left:1277px;top:855.9px;width:7px;height:2.5px;border-radius:2px 2px 0 0;background:#e8e8e8"></div>
<div class="t" style="left:1289px;top:849.7px;font-size:5px;line-height:6px;color:#5a5a5a">Fanny Pearson</div>
<div class="a" style="left:1289px;top:856.2px;width:18px;height:1.2px;background:#333"></div>
<div class="a" style="left:1275.5px;top:863.1px;width:10px;height:10px;border-radius:50%;background:#4a4a4a"></div>
<div class="a" style="left:1278.5px;top:865.1px;width:4px;height:4px;border-radius:50%;background:#e8e8e8"></div>
<div class="a" style="left:1277px;top:869.4px;width:7px;height:2.5px;border-radius:2px 2px 0 0;background:#e8e8e8"></div>
<div class="t" style="left:1289px;top:863.1px;font-size:5px;line-height:6px;color:#5a5a5a">Myra Bradley</div>
<div class="a" style="left:1289px;top:869.6px;width:18px;height:1.2px;background:#333"></div>
<div class="a" style="left:1275.5px;top:876.6px;width:10px;height:10px;border-radius:50%;background:#4a4a4a"></div>
<div class="a" style="left:1278.5px;top:878.6px;width:4px;height:4px;border-radius:50%;background:#e8e8e8"></div>
<div class="a" style="left:1277px;top:882.8px;width:7px;height:2.5px;border-radius:2px 2px 0 0;background:#e8e8e8"></div>
<div class="t" style="left:1289px;top:876.6px;font-size:5px;line-height:6px;color:#5a5a5a">Todd Ellis</div>
<div class="a" style="left:1289px;top:883.1px;width:18px;height:1.2px;background:#333"></div>
<div class="a" style="left:1275.5px;top:890.0px;width:10px;height:10px;border-radius:50%;background:#4a4a4a"></div>
<div class="a" style="left:1278.5px;top:892.0px;width:4px;height:4px;border-radius:50%;background:#e8e8e8"></div>
<div class="a" style="left:1277px;top:896.2px;width:7px;height:2.5px;border-radius:2px 2px 0 0;background:#e8e8e8"></div>
<div class="t" style="left:1289px;top:890.0px;font-size:5px;line-height:6px;color:#5a5a5a">Charles Peterson</div>
<div class="a" style="left:1289px;top:896.5px;width:18px;height:1.2px;background:#333"></div>
<div class="a" style="left:1275.5px;top:903.5px;width:10px;height:10px;border-radius:50%;background:#4a4a4a"></div>
<div class="a" style="left:1278.5px;top:905.5px;width:4px;height:4px;border-radius:50%;background:#e8e8e8"></div>
<div class="a" style="left:1277px;top:909.7px;width:7px;height:2.5px;border-radius:2px 2px 0 0;background:#e8e8e8"></div>
<div class="t" style="left:1289px;top:903.5px;font-size:5px;line-height:6px;color:#5a5a5a">Marian Hines</div>
<div class="a" style="left:1289px;top:910.0px;width:18px;height:1.2px;background:#333"></div>

</body></html>
